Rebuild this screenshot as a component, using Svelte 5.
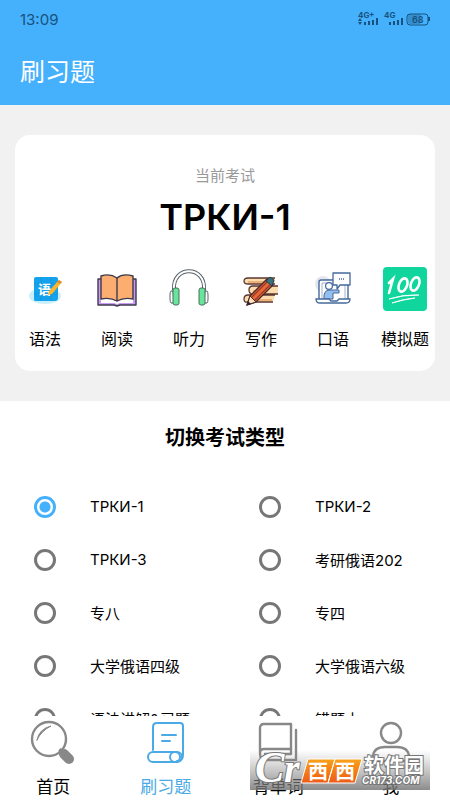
<script>
    const subjects = [
        { id: 'grammar', label: '语法' },
        { id: 'reading', label: '阅读' },
        { id: 'listening', label: '听力' },
        { id: 'writing', label: '写作' },
        { id: 'speaking', label: '口语' },
        { id: 'mock', label: '模拟题' }
    ];

    const exams = [
        'ТРКИ-1', 'ТРКИ-2',
        'ТРКИ-3', '考研俄语202',
        '专八', '专四',
        '大学俄语四级', '大学俄语六级',
        '语法讲解&习题', '错题本'
    ];

    const tabs = [
        { id: 'home', label: '首页' },
        { id: 'practice', label: '刷习题' },
        { id: 'words', label: '背单词' },
        { id: 'me', label: '我' }
    ];

    let current = 'ТРКИ-1';
    let activeTab = 'practice';
</script>

<div class="app">
    <header>
        <div class="status">
            <span class="time">13:09</span>
            <svg class="signals" width="72" height="18" viewBox="0 0 72 18">
                <g fill="#17527f">
                    <text x="0" y="8" class="net">4G</text>
                    <text x="11" y="7" class="net">+</text>
                    <path d="M0 11l2-3 2 3zM0 12l2 3 2-3zM6 12h2v3H6zM10 11h2v4h-2zM14 10h2v5h-2zM18 8h2v7h-2z" />
                    <text x="26" y="8" class="net">4G</text>
                    <path d="M31 12h2v3h-2zM35 11h2v4h-2zM39 10h2v5h-2zM43 8h2v7h-2z" />
                    <rect x="50" y="4" width="13" height="10" rx="2" opacity=".35" />
                    <path d="M70 7h2v4h-2z" />
                    <text x="54" y="13" class="level">68</text>
                </g>
                <rect x="49" y="4" width="21" height="11" rx="3" fill="none" stroke="#17527f" />
            </svg>
        </div>
        <h1>刷习题</h1>
    </header>

    <main>
        <section class="summary">
            <div class="card">
                <p class="hint">当前考试</p>
                <h2>{current}</h2>
                <div class="subjects">
                    {#each subjects as s}
                        <button class="subject">
                            <svg width="44" height="44" viewBox="0 0 44 44">
                                {#if s.id === 'grammar'}
                                    <ellipse cx="22" cy="29" rx="16" ry="8" fill="#c9effc" />
                                    <path d="M13 10h20q2 0 2 2v19q0 3-3 3H12q-1 0-1-2V12q0-2 2-2z" fill="#14a2ec" />
                                    <path d="M11 17h24M11 27h24M18 10v24M28 10v24" stroke="#1690d5" stroke-width=".6" />
                                    <text x="15" y="27" class="glyph">语</text>
                                    <path d="M36 13l3 2-10 12-4 1 1-4z" fill="#fdb62c" />
                                    <path d="M36 13l3 2-2 2-3-2z" fill="#e98b27" />
                                {:else if s.id === 'reading'}
                                    <path d="M3 12h38v26H25l-3 1-3-1H3z" fill="#c99cf0" stroke="#3e3a4c" stroke-width="1.4" stroke-linejoin="round" />
                                    <path d="M6 31q9-2 16 4 7-6 16-4v5H25l-3 1-3-1H6z" fill="#fff" />
                                    <path d="M22 11Q15 6 6 9v23q9-2 16 2 7-4 16-2V9Q28 6 22 11z" fill="#fbae70" stroke="#3e3a4c" stroke-width="1.4" stroke-linejoin="round" />
                                    <path d="M22 11v23" stroke="#3e3a4c" stroke-width="1.4" />
                                {:else if s.id === 'listening'}
                                    <path d="M7 23C5-2 39-2 37 23" fill="none" stroke="#59636a" stroke-width="4" />
                                    <path d="M7 23C5-2 39-2 37 23" fill="none" stroke="#fff" stroke-width="2" />
                                    <path d="M6 24H4q-1 1-1 4v4q0 3 1 4h3zM38 24h2q1 1 1 4v4q0 3-1 4h-3z" fill="#fff" stroke="#59636a" />
                                    <rect x="6" y="21" width="6" height="17" rx="2" fill="#67e599" stroke="#4c6d60" />
                                    <rect x="32" y="21" width="6" height="17" rx="2" fill="#67e599" stroke="#4c6d60" />
                                {:else if s.id === 'writing'}
                                    <g fill="#fbdcae" stroke="#5c3631" stroke-width="1.3">
                                        <path d="M36 11H9q-4 0-4 3t4 3h27M39 19H14q-4 0-4 4t4 4h25M36 28H9q-4 0-4 4t4 3h25" />
                                    </g>
                                    <path d="M9 15h20M14 24h15M9 33h24" stroke="#e6a264" stroke-width="1.6" />
                                    <path d="M8 38l3-9 17-17 6 6-17 17z" fill="#e66a36" stroke="#4b2728" stroke-width="1.3" />
                                    <path d="M12 31l18-18M15 34l18-18" stroke="#9e352d" stroke-width="1.3" />
                                    <path d="M8 38l3-9 6 6z" fill="#fce0bc" stroke="#4b2728" />
                                    <path d="M27 14l4-4 4 3-2 6z" fill="#37717b" stroke="#263d4a" />
                                    <path d="M8 38l1-4 3 3z" fill="#2b2631" />
                                {:else if s.id === 'speaking'}
                                    <circle cx="12" cy="17" r="8" fill="#e4e7ec" />
                                    <path d="M8 33V15q0-2 2-2h25q2 0 2 2v18" fill="#fff" stroke="#46699b" stroke-width="1.4" />
                                    <path d="M11 32V16h23v16" fill="none" stroke="#7a94b8" stroke-width=".7" />
                                    <path d="M13 32q-1-9 6-9h9v3h-6v6z" fill="#94bdf0" stroke="#46699b" />
                                    <circle cx="18" cy="19" r="3.4" fill="#fff" stroke="#46699b" stroke-width="1.2" />
                                    <path d="M22 6h17v12H29l-3 4v-4h-4z" fill="#fff" stroke="#46699b" stroke-width="1.3" stroke-linejoin="round" />
                                    <path d="M28 12h1M30 12h1M32 12h1" stroke="#46699b" stroke-width="1.4" />
                                    <path d="M5 32h13l2 2h6l2-2h11q0 4-4 4H9q-4 0-4-4z" fill="#fff" stroke="#46699b" stroke-width="1.3" />
                                {:else}
                                    <rect width="44" height="44" rx="4" fill="#10d69d" />
                                    <g fill="none" stroke="#fff" stroke-width="2.6" stroke-linecap="round">
                                        <path d="M6 16l4-4-4 14" />
                                        <ellipse cx="20" cy="18" rx="4" ry="7" transform="rotate(22 20 18)" />
                                        <ellipse cx="32" cy="17" rx="4" ry="7" transform="rotate(22 32 17)" />
                                    </g>
                                    <path d="M6 32q15-5 30-4-17 0-30 4zM9 36q10-4 23-5-13 2-23 5z" fill="#fff" stroke="#fff" stroke-width=".8" />
                                {/if}
                            </svg>
                            <span>{s.label}</span>
                        </button>
                    {/each}
                </div>
            </div>
        </section>

        <fieldset>
            <legend>切换考试类型</legend>
            <div class="options">
                {#each exams as exam}
                    <label>
                        <input type="radio" name="exam" value={exam} bind:group={current}>
                        <span>{exam}</span>
                    </label>
                {/each}
            </div>
        </fieldset>
    </main>

    <nav>
        {#each tabs as tab}
            <button class="tab" class:active={activeTab === tab.id} on:click={() => (activeTab = tab.id)}>
                <svg width="48" height="48" viewBox="0 0 48 48" fill="none" stroke="currentColor" stroke-width="2.4" stroke-linecap="round" stroke-linejoin="round">
                    {#if tab.id === 'home'}
                        <circle cx="20" cy="19" r="17" />
                        <path d="M8 20Q10 9 22 6 12 11 8 20z" fill="currentColor" stroke-width="1" />
                        <path d="M32 31l3 3" stroke-width="5" />
                        <path d="M35 34l5 5" stroke-width="10" />
                    {:else if tab.id === 'practice'}
                        <path d="M11 30V7q0-4 4-4h23q3 0 3 3v29q0 6-6 6" stroke-width="2" />
                        <rect x="6" y="32" width="34" height="10" rx="5" stroke-width="2" />
                        <circle cx="33" cy="37" r="5" stroke-width="2" />
                        <path d="M20 15h14M20 21h8" stroke-width="2" />
                    {:else if tab.id === 'words'}
                        <path d="M6 33V8q0-4 4-4h27v25H10q-4 0-4 4 0 7 5 7h31V10" />
                        <path d="M11 34h26V29" />
                    {:else}
                        <circle cx="24" cy="13" r="10" />
                        <path d="M6 41v-5q1-9 12-9h12q11 0 12 9v5z" />
                    {/if}
                </svg>
                <span>{tab.label}</span>
            </button>
        {/each}
    </nav>

    <svg class="watermark" width="180" height="40" viewBox="0 0 180 40">
        <defs>
            <linearGradient id="fade" x2="0" y2="1">
                <stop offset="0" stop-color="#888" stop-opacity="0" />
                <stop offset="1" stop-color="#777" stop-opacity=".85" />
            </linearGradient>
            <linearGradient id="tile" x2="0" y2="1">
                <stop offset="0" stop-color="#f9a21b" />
                <stop offset="1" stop-color="#ee5a16" />
            </linearGradient>
        </defs>
        <rect width="180" height="40" fill="url(#fade)" />
        <text x="5" y="32" class="mark big">C</text>
        <text x="34" y="32" class="mark small">r</text>
        <path d="M58 9h27l-7 24H51zM85 9h27l-7 24H78z" fill="url(#tile)" stroke="#fff" />
        <text x="58" y="29" class="xi">西</text>
        <text x="85" y="29" class="xi">西</text>
        <text x="114" y="23" class="mark soft">软件园</text>
        <text x="112" y="34" class="mark site">CR173.COM</text>
    </svg>
</div>

<style>
    :global(body) {
        margin: 0;
        background: #fff;
    }

    .app {
        position: relative;
        display: flex;
        flex-direction: column;
        height: 100dvh;
        font-family: Inter, "Noto Sans CJK SC", sans-serif;
        color: #000;
    }

    header {
        flex: none;
        height: 105px;
        box-sizing: border-box;
        padding: 10px 20px 0;
        background: #45b0fb;
    }

    .status {
        display: flex;
        align-items: center;
        justify-content: space-between;
        height: 18px;
        color: #17527f;
    }

    .time {
        font-size: 15px;
    }

    .signals {
        overflow: visible;
    }

    .net {
        font-size: 8px;
        font-weight: 700;
    }

    .level {
        font-size: 9px;
        font-weight: 600;
    }

    h1 {
        margin: 26px 0 0;
        font-size: 25px;
        line-height: 36px;
        font-weight: 400;
        color: #fff;
    }

    main {
        flex: 1;
        min-height: 0;
        overflow-y: auto;
        scrollbar-width: none;
    }

    .summary {
        padding: 30px 15px;
        background: #f1f1f1;
    }

    .card {
        padding: 29px 0 20px;
        border-radius: 15px;
        background: #fff;
        text-align: center;
    }

    .hint {
        margin: 0;
        font-size: 15px;
        line-height: 24px;
        color: #999;
    }

    h2 {
        margin: 5px 0 26px;
        font-size: 36px;
        line-height: 48px;
        font-weight: 600;
    }

    .subjects {
        display: flex;
        justify-content: space-between;
    }

    .subject {
        display: flex;
        flex-direction: column;
        align-items: center;
        gap: 16px;
        width: 60px;
        padding: 0;
        border: none;
        background: none;
        color: inherit;
        font-family: inherit;
        font-size: 16px;
        line-height: 24px;
        white-space: nowrap;
    }

    .glyph {
        font-size: 13px;
        font-weight: 700;
        fill: #fff;
    }

    fieldset {
        margin: 0;
        padding: 0;
        border: none;
    }

    legend {
        width: 100%;
        padding: 22px 0 27px;
        font-size: 20px;
        line-height: 30px;
        font-weight: 700;
        text-align: center;
    }

    .options {
        display: grid;
        grid-template-columns: 1fr 1fr;
    }

    label {
        display: flex;
        align-items: center;
        gap: 34px;
        height: 53px;
        padding-left: 34px;
        font-size: 15px;
        white-space: nowrap;
    }

    input {
        appearance: none;
        flex: none;
        width: 22px;
        height: 22px;
        margin: 0;
        border: 3px solid #777;
        border-radius: 50%;
    }

    input:checked {
        border-color: #45b0fb;
        background: radial-gradient(circle, #45b0fb 5px, #fff 6px);
    }

    nav {
        flex: none;
        display: grid;
        grid-template-columns: repeat(4, 1fr);
        margin: 0 3px 0 -3px;
        padding-top: 4px;
        height: 80px;
        background: #fff;
    }

    .tab {
        display: flex;
        flex-direction: column;
        align-items: center;
        gap: 7px;
        padding: 0;
        border: none;
        background: none;
        color: #000;
        font-family: inherit;
        font-size: 17px;
        line-height: 25px;
    }

    .tab svg {
        color: #888;
    }

    .tab.active,
    .tab.active svg {
        color: #4aaae6;
    }

    .watermark {
        position: absolute;
        right: 20px;
        bottom: 10px;
        pointer-events: none;
    }

    .mark {
        fill: #fff;
        stroke: #777;
        stroke-width: 2px;
        paint-order: stroke;
        font-weight: 700;
    }

    .big {
        font-family: "Liberation Serif", serif;
        font-size: 44px;
        font-style: italic;
    }

    .small {
        font-family: "Liberation Serif", serif;
        font-size: 40px;
        font-style: italic;
    }

    .xi {
        font-size: 20px;
        font-weight: 700;
        fill: #fff;
    }

    .soft {
        font-size: 20px;
    }

    .site {
        font-size: 10px;
        font-style: italic;
    }
</style>
